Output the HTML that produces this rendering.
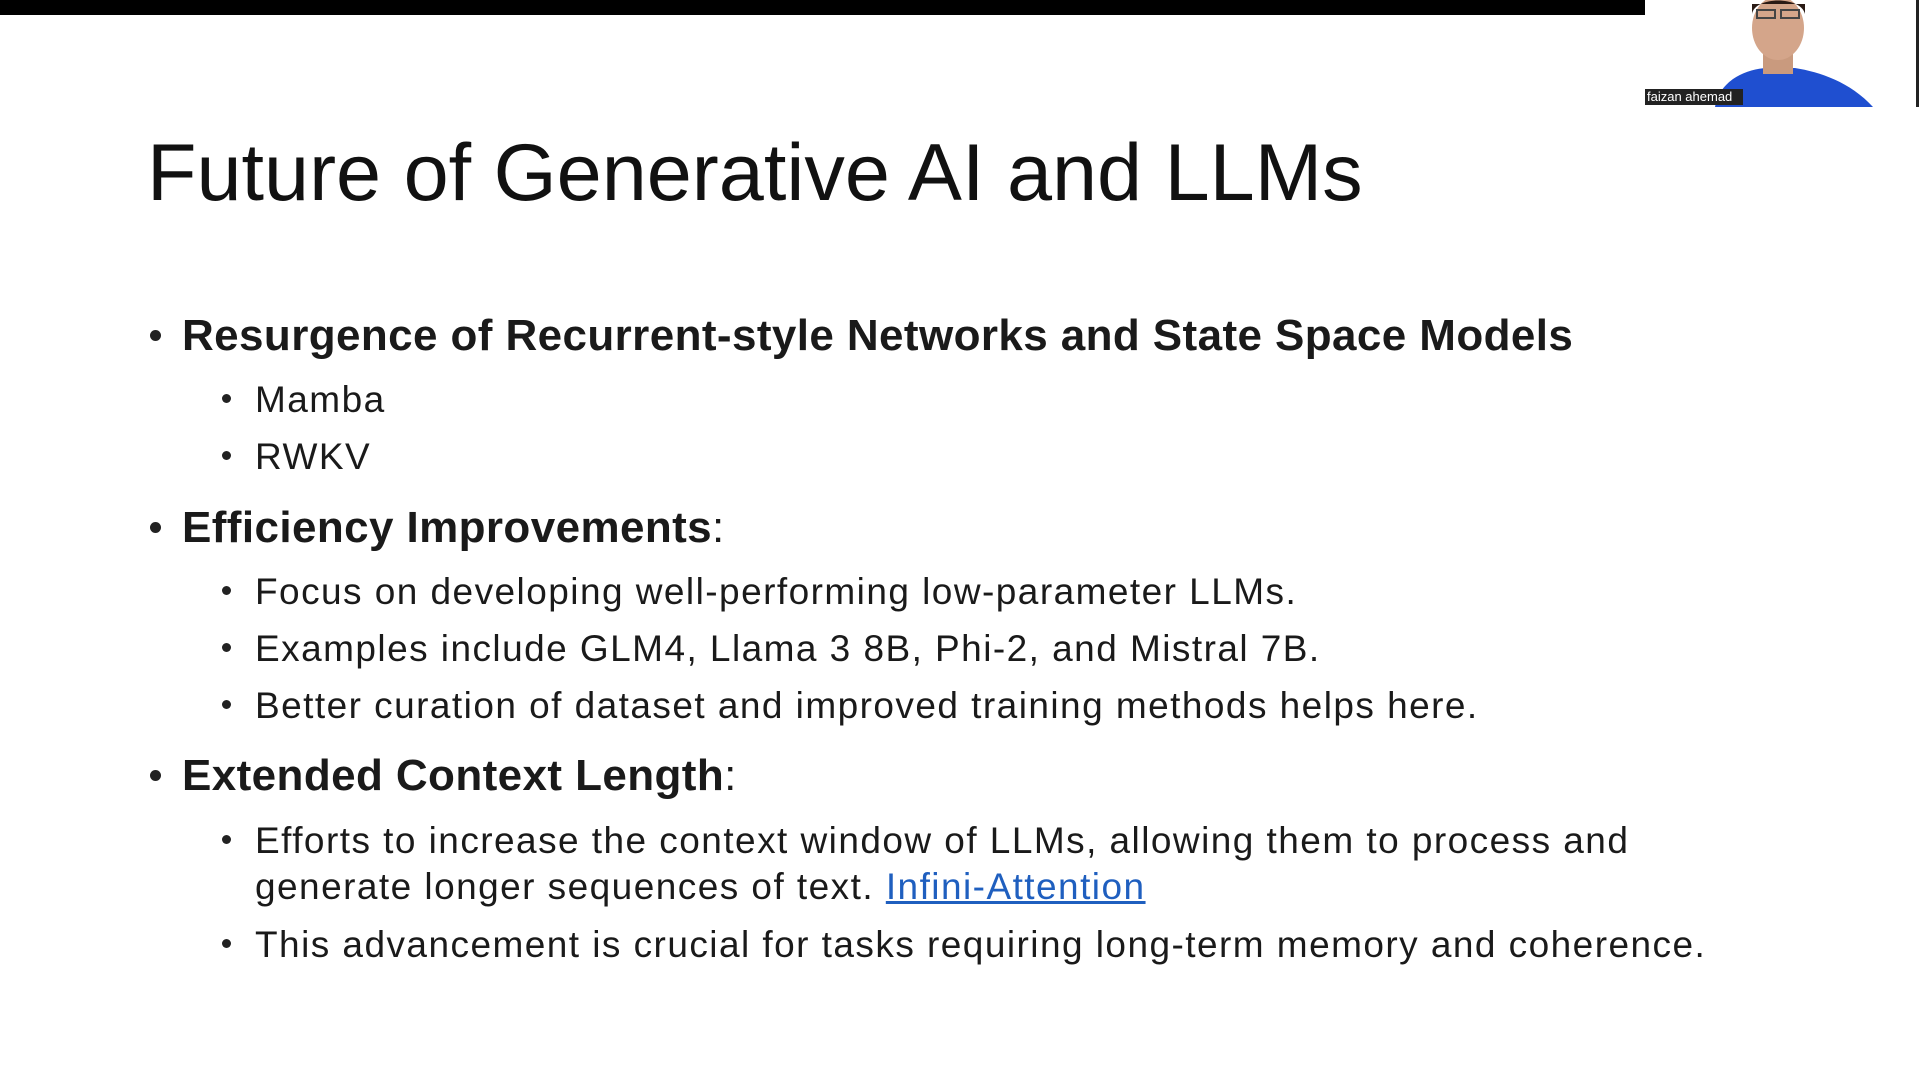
<!DOCTYPE html>
<html><head><meta charset="utf-8"><style>
body{margin:0;width:1920px;height:1080px;background:#fff;position:relative;overflow:hidden;font-family:"Liberation Sans",sans-serif;color:#1a1a1a}
.a{position:absolute;white-space:nowrap;line-height:1}
.t{font-size:81px;left:147px;top:133px;color:#111}
.h{font-size:44px;font-weight:bold;left:182px;letter-spacing:0.4px}
.h i{font-style:normal;font-weight:normal}
.s{font-size:37px;left:255px;letter-spacing:1.45px}
.b1,.b2{position:absolute;border-radius:50%;background:#222}
.b1{width:11px;height:11px;left:150px}
.b2{width:9px;height:9px;left:222px}
a{color:#1f5fbf;text-decoration:underline}
</style></head><body>
<div style="position:absolute;left:0;top:0;width:1645px;height:15px;background:#000"></div>
<div style="position:absolute;left:1916px;top:0;width:3px;height:107px;background:#222"></div>
<svg style="position:absolute;left:1645px;top:0" width="228" height="107" viewBox="0 0 228 107">
<path d="M70 107 C75 80 100 70 120 68 L150 68 C175 72 205 82 228 107 Z" fill="#1f4fd0"/>
<rect x="118" y="50" width="30" height="24" fill="#c99a7e"/>
<ellipse cx="133" cy="28" rx="26" ry="32" fill="#d4a58a"/>
<path d="M107 14 C110 -4 156 -4 160 14 L160 4 L107 4Z" fill="#2a1a14"/>
<rect x="112" y="10" width="18" height="8" fill="none" stroke="#444" stroke-width="2"/>
<rect x="136" y="10" width="18" height="8" fill="none" stroke="#444" stroke-width="2"/>
</svg>
<div class="a" style="left:1645px;top:89px;width:96px;height:16px;background:#222;color:#fff;font-size:13px;line-height:16px;padding-left:2px">faizan ahemad</div>

<div class="a t">Future of Generative AI and LLMs</div>

<div class="b1" style="top:330px"></div><div class="a h" style="top:314px">Resurgence of Recurrent-style Networks and State Space Models</div>
<div class="b2" style="top:394px"></div><div class="a s" style="top:381px">Mamba</div>
<div class="b2" style="top:451px"></div><div class="a s" style="top:438px">RWKV</div>
<div class="b1" style="top:522px"></div><div class="a h" style="top:506px">Efficiency Improvements<i>:</i></div>
<div class="b2" style="top:586px"></div><div class="a s" style="top:573px">Focus on developing well-performing low-parameter LLMs.</div>
<div class="b2" style="top:643px"></div><div class="a s" style="top:630px">Examples include GLM4, Llama 3 8B, Phi-2, and Mistral 7B.</div>
<div class="b2" style="top:700px"></div><div class="a s" style="top:687px">Better curation of dataset and improved training methods helps here.</div>
<div class="b1" style="top:770px"></div><div class="a h" style="top:754px">Extended Context Length<i>:</i></div>
<div class="b2" style="top:835px"></div><div class="a s" style="top:822px">Efforts to increase the context window of LLMs, allowing them to process and</div>
<div class="a s" style="top:868px">generate longer sequences of text. <a>Infini-Attention</a></div>
<div class="b2" style="top:939px"></div><div class="a s" style="top:926px">This advancement is crucial for tasks requiring long-term memory and coherence.</div>
</body></html>
